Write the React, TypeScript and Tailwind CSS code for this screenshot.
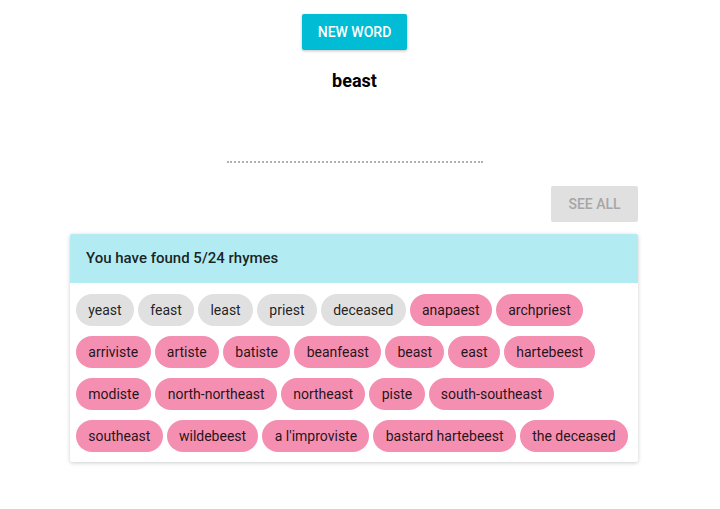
import React from 'react';

const found = ['yeast', 'feast', 'least', 'priest', 'deceased'];
const missed = [
  'anapaest', 'archpriest', 'arriviste', 'artiste', 'batiste', 'beanfeast', 'beast', 'east',
  'hartebeest', 'modiste', 'north-northeast', 'northeast', 'piste', 'south-southeast',
  'southeast', 'wildebeest', "a l'improviste", 'bastard hartebeest', 'the deceased',
];

export default function App() {
  return (
    <div
      className="min-h-[509px] w-[709px] bg-white text-[rgba(0,0,0,0.87)]"
      style={{ fontFamily: 'Roboto, "Liberation Sans", sans-serif' }}
    >
      <div className="flex flex-col items-center pt-[14px]">
        <button className="h-9 rounded-[2px] bg-[#00bcd4] px-4 text-sm font-medium uppercase text-white shadow-[0_1px_3px_rgba(0,0,0,0.25)]">
          New Word
        </button>
        <h1 className="mt-[19px] text-lg font-bold leading-6 text-black">beast</h1>
        <div className="mt-[68px] h-0 w-64 border-b-2 border-dotted border-[#b0b0b0]" />
      </div>

      <div className="ml-[70px] w-[568px]">
        <div className="mt-[23px] flex justify-end">
          <button className="h-9 w-[87px] rounded-[2px] bg-[#e0e0e0] text-sm font-medium uppercase text-[#a6a6a6]">
            See All
          </button>
        </div>

        {/* Rhymes card */}
        <div className="mt-3 overflow-hidden rounded-[2px] bg-white shadow-[0_1px_4px_rgba(0,0,0,0.2)]">
          <div className="flex h-[49px] items-center bg-[#b2ebf2] px-4 text-[15px] font-medium">
            You have found 5/24 rhymes
          </div>
          <div className="flex flex-wrap gap-x-1 gap-y-[10px] px-[6px] pb-[10px] pt-[11px]">
            {found.map(w => (
              <span key={w} className="flex h-8 items-center rounded-full bg-[#e0e0e0] px-[12.3px] text-sm">
                {w}
              </span>
            ))}
            {missed.map(w => (
              <span key={w} className="flex h-8 items-center rounded-full bg-[#f48fb1] px-[12.3px] text-sm">
                {w}
              </span>
            ))}
          </div>
        </div>
      </div>
    </div>
  );
}
